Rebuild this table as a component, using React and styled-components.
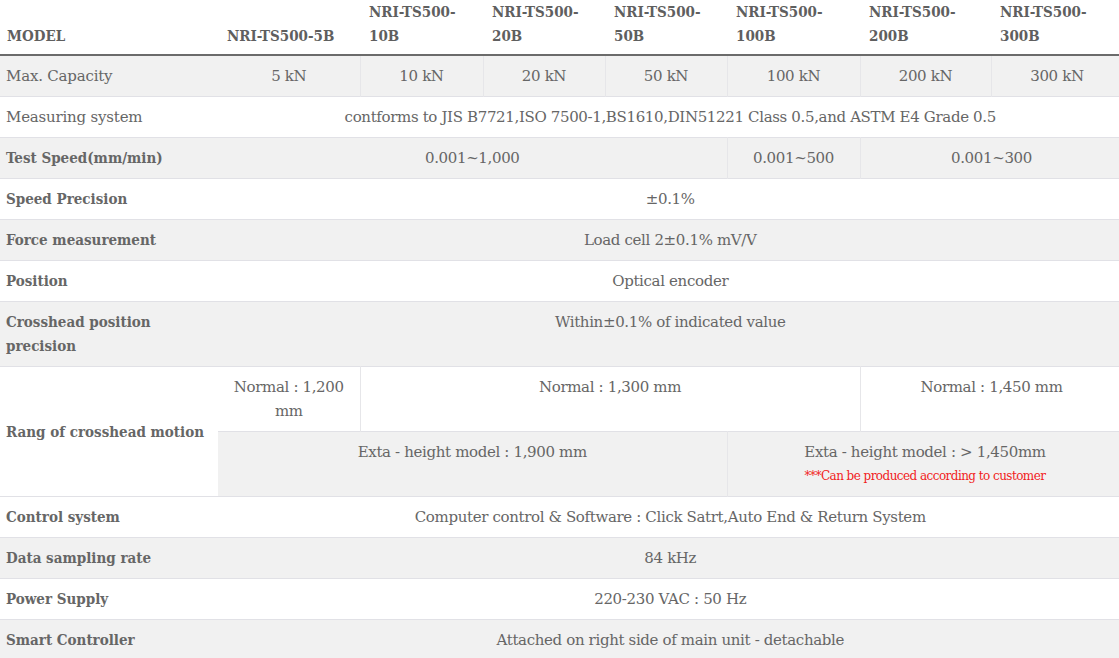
import React from "react";
import styled, { createGlobalStyle } from "styled-components";

const Global = createGlobalStyle`
  html, body { margin: 0; padding: 0; background: #fff; overflow: hidden; }
  body { font-family: "DejaVu Serif", "Liberation Serif", serif; }
`;

const Wrap = styled.div`
  width: 1123px;
`;

const Table = styled.table`
  width: 1123px;
  table-layout: fixed;
  border-collapse: collapse;
  font-size: 15px;
  line-height: 24px;
  color: #666;
`;

const HeadCell = styled.th`
  text-align: left;
  vertical-align: bottom;
  font-weight: 700;
  font-stretch: condensed;
  color: #5f5f5f;
  padding: 0 8px 6px ${(p) => (p.$first ? "7px" : "9px")};
  border-bottom: 2px solid #6b6b6b;
  white-space: nowrap;
`;

const Row = styled.tr`
  background: ${(p) => (p.$alt ? "#f1f1f1" : "#fff")};
  border-bottom: 1px solid #e1e1e6;
`;

const LabelCell = styled.td`
  text-align: left;
  vertical-align: middle;
  padding: 8px 6px;
  font-weight: ${(p) => (p.$plain ? 400 : 700)};
  font-stretch: ${(p) => (p.$plain ? "normal" : "condensed")};
  letter-spacing: ${(p) => (p.$plain ? "-0.2px" : "0")};
  white-space: nowrap;
  background: ${(p) => (p.$white ? "#fff" : "inherit")};
  border-bottom: 1px solid #e1e1e6;
`;

const ValueCell = styled.td`
  text-align: center;
  vertical-align: top;
  padding: 8px 6px;
  letter-spacing: -0.35px;
  border-right: 1px solid #e6e6e9;
  white-space: nowrap;
`;

const Note = styled.div`
  color: #f21c1c;
  font-size: 12px;
  line-height: 24px;
  letter-spacing: -0.55px;
`;

const models = ["5B", "10B", "20B", "50B", "100B", "200B", "300B"];
const widths = [218, 142, 123, 122, 122, 133, 131, 132];

const simpleRows = [
  { label: "Control system", value: "Computer control & Software : Click Satrt,Auto End & Return System" },
  { label: "Data sampling rate", value: "84 kHz" },
  { label: "Power Supply", value: "220-230 VAC : 50 Hz" },
  { label: "Smart Controller", value: "Attached on right side of main unit - detachable" },
];

export default function App() {
  return (
    <Wrap>
      <Global />
      <Table>
        <colgroup>
          {widths.map((w, i) => (
            <col key={i} style={{ width: w }} />
          ))}
        </colgroup>
        <thead>
          <tr>
            <HeadCell $first>MODEL</HeadCell>
            {models.map((m, i) =>
              i === 0 ? (
                <HeadCell key={m}>NRI-TS500-{m}</HeadCell>
              ) : (
                <HeadCell key={m}>
                  NRI-TS500-
                  <br />
                  {m}
                </HeadCell>
              )
            )}
          </tr>
        </thead>
        <tbody>
          <Row $alt>
            <LabelCell $plain>Max. Capacity</LabelCell>
            {["5 kN", "10 kN", "20 kN", "50 kN", "100 kN", "200 kN", "300 kN"].map((v) => (
              <ValueCell key={v}>{v}</ValueCell>
            ))}
          </Row>
          <Row>
            <LabelCell $plain>Measuring system</LabelCell>
            <ValueCell colSpan={7}>
              contforms to JIS B7721,ISO 7500-1,BS1610,DIN51221 Class 0.5,and ASTM E4 Grade 0.5
            </ValueCell>
          </Row>
          <Row $alt>
            <LabelCell>Test Speed(mm/min)</LabelCell>
            <ValueCell colSpan={4}>0.001~1,000</ValueCell>
            <ValueCell>0.001~500</ValueCell>
            <ValueCell colSpan={2}>0.001~300</ValueCell>
          </Row>
          <Row>
            <LabelCell>Speed Precision</LabelCell>
            <ValueCell colSpan={7}>±0.1%</ValueCell>
          </Row>
          <Row $alt>
            <LabelCell>Force measurement</LabelCell>
            <ValueCell colSpan={7}>Load cell 2±0.1% mV/V</ValueCell>
          </Row>
          <Row>
            <LabelCell>Position</LabelCell>
            <ValueCell colSpan={7}>Optical encoder</ValueCell>
          </Row>
          <Row $alt>
            <LabelCell>
              Crosshead position
              <br />
              precision
            </LabelCell>
            <ValueCell colSpan={7}>Within±0.1% of indicated value</ValueCell>
          </Row>
          <Row>
            <LabelCell rowSpan={2} $white>
              Rang of crosshead motion
            </LabelCell>
            <ValueCell>
              Normal : 1,200
              <br />
              mm
            </ValueCell>
            <ValueCell colSpan={4}>Normal : 1,300 mm</ValueCell>
            <ValueCell colSpan={2}>Normal : 1,450 mm</ValueCell>
          </Row>
          <Row $alt>
            <ValueCell colSpan={4}>Exta - height model : 1,900 mm</ValueCell>
            <ValueCell colSpan={3}>
              Exta - height model : &gt; 1,450mm
              <Note>***Can be produced according to customer</Note>
            </ValueCell>
          </Row>
          {simpleRows.map((r, i) => (
            <Row key={r.label} $alt={i % 2 === 1}>
              <LabelCell>{r.label}</LabelCell>
              <ValueCell colSpan={7}>{r.value}</ValueCell>
            </Row>
          ))}
        </tbody>
      </Table>
    </Wrap>
  );
}
